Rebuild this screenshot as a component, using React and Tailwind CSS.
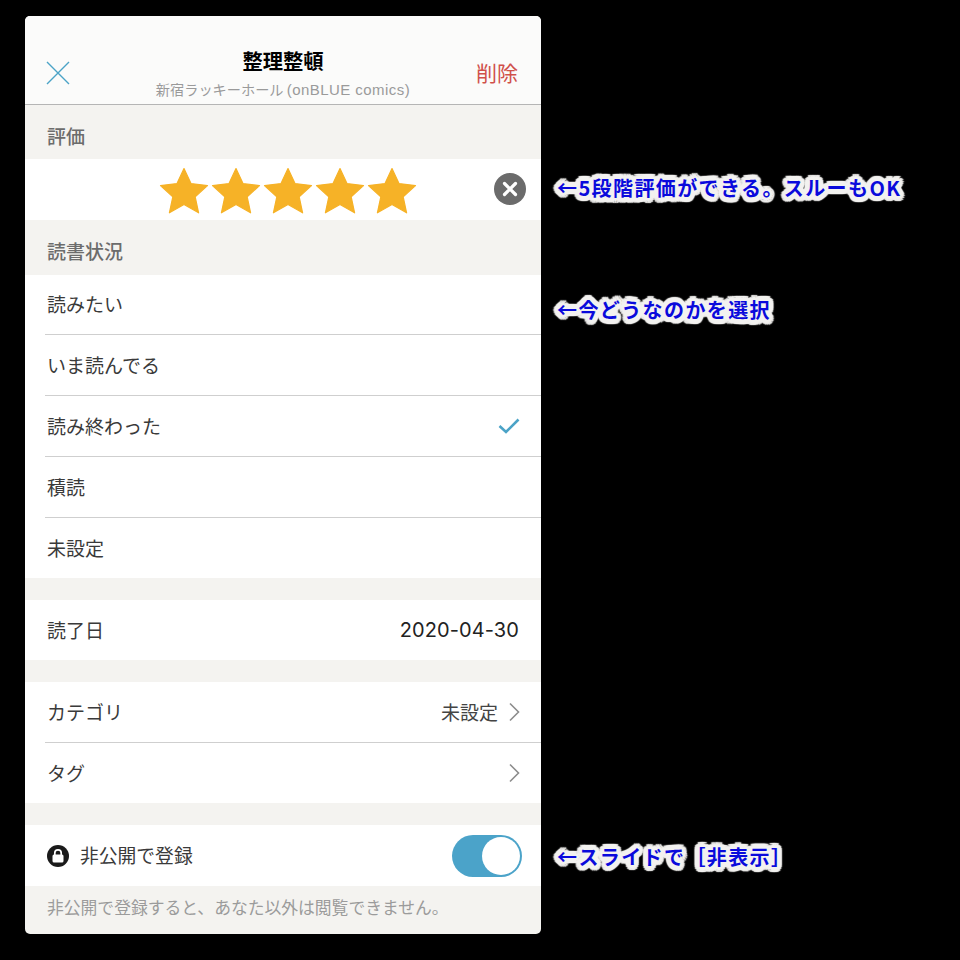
import React from "react";

const font = "font-['Noto_Sans_CJK_JP','Noto_Sans',sans-serif]";

function Star() {
  return (
    <svg width="50" height="47" viewBox="0 0 50 47" className="shrink-0">
      <path
        d="M25 1.5 L32 16.6 L48.5 18.6 L36.2 29.8 L39.6 45.8 L25 37.6 L10.4 45.8 L13.8 29.8 L1.5 18.6 L18 16.6 Z"
        fill="#f6b227"
        stroke="#f6b227"
        strokeWidth="1.2"
        strokeLinejoin="round"
      />
    </svg>
  );
}

function Chevron() {
  return (
    <svg width="12" height="20" viewBox="0 0 12 20" fill="none" className="shrink-0 -mr-[1px]">
      <path d="M2 1.5 L10.5 10 L2 18.5" stroke="#8c8c8c" strokeWidth="1.6" />
    </svg>
  );
}

function Row({ children, last, h = "h-[60px]" }) {
  return (
    <div className={`${h} ml-5 pl-[2px] flex items-center pr-[22px] text-[19px] text-[#3a3a3a] ${last ? "" : "border-b border-[#cfcfcf] box-content"}`}>
      {children}
    </div>
  );
}

function Note({ children, className }) {
  return (
    <p className={`text-[20px] leading-[26px] font-bold whitespace-nowrap text-[#0a0adc] tracking-[1.4px] [text-shadow:5px_0_1px_#f3f2f0,-5px_0_1px_#f3f2f0,0_5px_1px_#f3f2f0,0_-5px_1px_#f3f2f0,3.5px_3.5px_1px_#f3f2f0,-3.5px_3.5px_1px_#f3f2f0,3.5px_-3.5px_1px_#f3f2f0,-3.5px_-3.5px_1px_#f3f2f0,4.6px_1.9px_1px_#f3f2f0,-4.6px_1.9px_1px_#f3f2f0,4.6px_-1.9px_1px_#f3f2f0,-4.6px_-1.9px_1px_#f3f2f0,1.9px_4.6px_1px_#f3f2f0,-1.9px_4.6px_1px_#f3f2f0,1.9px_-4.6px_1px_#f3f2f0,-1.9px_-4.6px_1px_#f3f2f0,3px_0_0_#f3f2f0,-3px_0_0_#f3f2f0,0_3px_0_#f3f2f0,0_-3px_0_#f3f2f0,2px_2px_0_#f3f2f0,-2px_2px_0_#f3f2f0,2px_-2px_0_#f3f2f0,-2px_-2px_0_#f3f2f0] ${className}`}>
      {children}
    </p>
  );
}

export default function App() {
  return (
    <div className={`w-[960px] h-[960px] bg-black flex ${font}`}>
      {/* panel */}
      <div className="w-[516px] h-[918px] ml-[25px] mt-4 rounded-[5px] overflow-hidden bg-[#f4f3f0] flex flex-col">
        <div className="h-[89px] shrink-0 bg-[#fbfbfa] border-b border-[#b5b5b5] grid grid-cols-[1fr_auto_1fr] items-start px-[21px]">
          <svg width="24" height="24" viewBox="0 0 24 24" fill="none" className="mt-[45px]">
            <path d="M1 1 L23 23 M23 1 L1 23" stroke="#4ba3c7" strokeWidth="1.4" />
          </svg>
          <div className="flex flex-col items-center pt-[29px]">
            <p className="text-[20.3px] leading-[30px] font-bold text-black">整理整頓</p>
            <p className="text-[14.2px] leading-[20px] mt-1 text-[#9a9a9a] whitespace-nowrap">
              新宿ラッキーホール <span className="font-['Liberation_Sans',sans-serif] text-[15px] tracking-[0.45px]">(onBLUE comics)</span>
            </p>
          </div>
          <p className="text-[21px] leading-[30px] mt-[41px] pr-[2px] text-[#d0504a] text-right">削除</p>
        </div>

        <div className="h-[54px] shrink-0 pl-[22px] flex items-center pt-2 text-[19px] font-medium text-[#6c6c6c]">評価</div>
        <div className="h-[61px] shrink-0 bg-white relative flex items-start justify-center gap-[2px] pt-2 pl-[10px]">
          <Star />
          <Star />
          <Star />
          <Star />
          <Star />
          <div className="absolute right-[15px] top-[14px] w-8 h-8 rounded-full bg-[#6b6b6b] flex items-center justify-center">
            <svg width="16" height="16" viewBox="0 0 16 16" fill="none">
              <path d="M2.5 2.5 L13.5 13.5 M13.5 2.5 L2.5 13.5" stroke="#fff" strokeWidth="3.2" strokeLinecap="round" />
            </svg>
          </div>
        </div>

        <div className="h-[55px] shrink-0 pl-[22px] flex items-center pt-2 text-[19px] font-medium text-[#6c6c6c]">読書状況</div>
        <div className="shrink-0 bg-white">
          <Row h="h-[59px]">読みたい</Row>
          <Row>いま読んでる</Row>
          <Row>
            <span className="flex-1">読み終わった</span>
            <svg width="22" height="16" viewBox="0 0 22 16" fill="none" className="-mr-[1px]">
              <path d="M1.5 8 L8 14 L20.5 1.5" stroke="#4ba3c7" strokeWidth="2.6" />
            </svg>
          </Row>
          <Row>積読</Row>
          <Row last>未設定</Row>
        </div>

        <div className="h-[22px] shrink-0" />
        <div className="shrink-0 bg-white">
          <Row last>
            <span className="flex-1">読了日</span>
            <span className="font-['Inter',sans-serif] text-[20px] tracking-[0.1px] text-[#222]">2020-04-30</span>
          </Row>
        </div>

        <div className="h-[22px] shrink-0" />
        <div className="shrink-0 bg-white">
          <Row>
            <span className="flex-1">カテゴリ</span>
            <span className="text-[#444] mr-[10px]">未設定</span>
            <Chevron />
          </Row>
          <Row last>
            <span className="flex-1">タグ</span>
            <Chevron />
          </Row>
        </div>

        <div className="h-[22px] shrink-0" />
        <div className="h-[61px] shrink-0 bg-white flex items-center pl-[22px] pr-[19px]">
          <svg width="22" height="22" viewBox="0 0 22 22" className="shrink-0">
            <circle cx="11" cy="11" r="11" fill="#1a1a1a" />
            <rect x="5.5" y="9.5" width="11" height="8" rx="1.5" fill="#fff" />
            <path d="M7.8 10 V8 a3.2 3.2 0 0 1 6.4 0 V10" fill="none" stroke="#fff" strokeWidth="1.7" />
          </svg>
          <span className="flex-1 ml-[11px] text-[18.8px] text-[#3a3a3a]">非公開で登録</span>
          <div className="w-[70px] h-[42px] rounded-full bg-[#4ba3c9] flex items-center justify-end pr-[2px]">
            <div className="w-[38px] h-[38px] rounded-full bg-white" />
          </div>
        </div>
        <p className="pl-[22px] pt-2 text-[16.8px] leading-[26px] text-[#9b9b9b] whitespace-nowrap">非公開で登録すると、あなた以外は閲覧できません。</p>
      </div>

      {/* annotations */}
      <div className="ml-4 pt-[175px] flex flex-col">
        <Note>←5段階評価ができる。スルーもOK</Note>
        <Note className="mt-[96px]">←今どうなのかを選択</Note>
        <Note className="mt-[521px]">←スライドで［非表示］</Note>
      </div>
    </div>
  );
}
